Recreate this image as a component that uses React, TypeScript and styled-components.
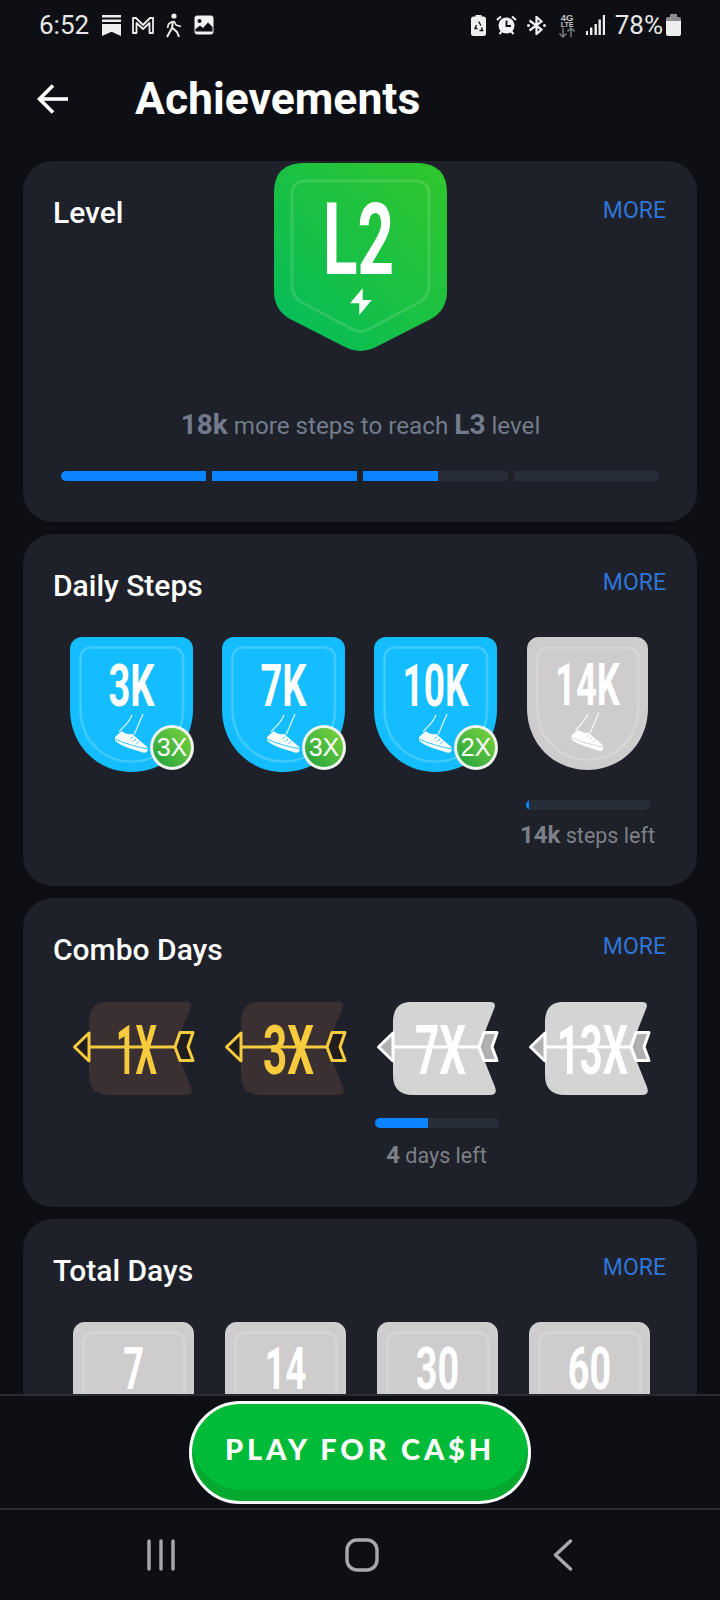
import React from "react";
import styled, { createGlobalStyle } from "styled-components";

const GlobalStyle = createGlobalStyle`
  html, body {
    margin: 0;
    padding: 0;
    background: #0d0f14;
  }
  * {
    box-sizing: border-box;
  }
`;

function ShoeMark({ gap }: { gap: string }) {
  return (
    <g>
      <path d="M62 78C59 86 53 90 49 95" fill="none" stroke="#fff" strokeWidth="1.2" opacity="0.85" />
      <path d="M73 77L64 98" fill="none" stroke="#fff" strokeWidth="1.2" opacity="0.85" />
      <path d="M45 100L52 94Q56 98 62 97L75 108Q78 110 77.5 113V114Q76 116.5 73 115.5L60 111.5Q50 108 45.5 104Z" fill="#fff" />
      <path d="M46 102.5Q58 108 77 111.8" fill="none" stroke={gap} strokeWidth="0.9" />
      <path d="M63 99.5L60.5 102M66 102L63.5 104.5M69 104.5L66.5 107" fill="none" stroke={gap} strokeWidth="0.9" />
    </g>
  );
}

function Shield({ tone, label, width, shoe, x2 }: { tone: "blue" | "grey"; label: string; width: number; shoe?: boolean; x2?: string }) {
  const fill = tone === "blue" ? "#13bdff" : "#cecccd";
  return (
    <ShieldBox $grey={tone === "grey"}>
      <svg width="100%" height="100%" viewBox="0 0 123 135">
        <path d="M12 0H111A12 12 0 0 1 123 12V72C123 108 96 135 61.5 135C27 135 0 108 0 72V12A12 12 0 0 1 12 0Z" fill={fill} />
        <path
          d="M20 10.5H103A10 10 0 0 1 113 20.5V72C113 102 91 124.5 61.5 124.5C32 124.5 10.5 102 10.5 72V20.5A10 10 0 0 1 20 10.5Z"
          fill="none"
          stroke="rgba(255,255,255,0.2)"
          strokeWidth="2.5"
        />
        <BadgeText x="61.5" y={shoe ? 69 : 68} textAnchor="middle" fontSize="60" textLength={width} lengthAdjust="spacingAndGlyphs">
          {label}
        </BadgeText>
        {shoe && <ShoeMark gap={fill} />}
      </svg>
      {x2 && <Multiplier>{x2}</Multiplier>}
    </ShieldBox>
  );
}

function ComboArrow({ label, width, done }: { label: string; width: number; done?: boolean }) {
  const body = done ? "#3a2f31" : "#d4d4d4";
  const line = done ? "#f6cb3e" : "#ffffff";
  const inner = done ? "#211d1e" : "#b0b0b0";
  return (
    <svg width="128" height="100" viewBox="-4 0 128 100">
      <path d="M34 2H113Q120 2 117 9L102 47L118 87Q121 95 113 95H36Q16 95 16 75V22Q16 2 34 2Z" fill={body} />
      <path d="M1.5 47L16 33V61Z" fill={inner} stroke={line} strokeWidth="3" strokeLinejoin="round" />
      <path d="M102 47L107 32.5H120L115 47L120 60.5H107Z" fill={inner} stroke={line} strokeWidth="3" strokeLinejoin="round" />
      <line x1="16" y1="47" x2="102" y2="47" stroke={line} strokeWidth="3" />
      <BadgeText x="63.5" y="74" textAnchor="middle" fontSize="69" $color={line} textLength={width} lengthAdjust="spacingAndGlyphs">
        {label}
      </BadgeText>
    </svg>
  );
}

function LevelBadge() {
  return (
    <svg width="173" height="190" viewBox="0 0 173 190">
      <defs>
        <linearGradient id="levelGreen" x1="1" y1="0" x2="0" y2="1">
          <stop offset="0" stopColor="#31c62b" />
          <stop offset="1" stopColor="#03bc5c" />
        </linearGradient>
      </defs>
      <path
        d="M30 0H143Q173 0 173 30V128Q173 147 157 156L100 185Q86 191 73 185L16 156Q0 147 0 128V30Q0 0 30 0Z"
        fill="url(#levelGreen)"
      />
      <path
        d="M32 18H141Q155 18 155 32V122Q155 134 144 140L95 166Q86 171 78 166L29 140Q18 134 18 122V32Q18 18 32 18Z"
        fill="none"
        stroke="rgba(255,255,255,0.13)"
        strokeWidth="3"
      />
      <BadgeText x="84.5" y="111" textAnchor="middle" fontSize="101" textLength="71" lengthAdjust="spacingAndGlyphs">
        L2
      </BadgeText>
      <path d="M88.7 125.3L76 140.3H85.3V152L97.7 137H88.7Z" fill="#fff" />
    </svg>
  );
}

function StatusLeft() {
  return (
    <>
      <svg width="19" height="21" viewBox="0 0 19 21" fill="#eee">
        <rect width="19" height="2.5" />
        <rect y="4.5" width="19" height="2.5" />
        <path d="M0 9H19V21L9.5 16.8L0 21Z" />
      </svg>
      <svg width="22" height="17" viewBox="0 0 22 17" fill="none" stroke="#eee" strokeWidth="1.8" strokeLinejoin="round">
        <path d="M1 16V1H4L11 8L18 1H21V16H17.5V6L11 12L4.5 6V16Z" />
      </svg>
      <svg width="18" height="25" viewBox="0 0 18 25" fill="none" stroke="#eee" strokeWidth="2" strokeLinejoin="round">
        <circle cx="9" cy="3" r="2.6" fill="#eee" stroke="none" />
        <path d="M8 8L7 15L2 24" />
        <path d="M7.5 15L12 19L14 24" />
        <path d="M7.5 8.5L3.5 11L2.5 15" strokeWidth="1.6" />
        <path d="M9 8L11 12L16 13.5" strokeWidth="1.6" />
      </svg>
      <svg width="20" height="20" viewBox="0 0 20 20">
        <rect width="19" height="19" x="0.5" y="0.5" rx="3" fill="#f2f2f2" />
        <circle cx="5.5" cy="6" r="2" fill="#0d0f14" />
        <path d="M1.5 16.5V14L6 10.5L9 13L14 7.5L18.5 12V16.5Z" fill="#0d0f14" />
      </svg>
    </>
  );
}

function StatusRight() {
  return (
    <>
      <svg width="15" height="21" viewBox="0 0 15 21">
        <rect x="4.5" width="6" height="2.5" fill="#eee" />
        <rect y="1.5" width="15" height="19.5" rx="2.5" fill="#eee" />
        <path d="M7.5 6.5L10 10.5M5.5 10L4 13.5H6.5M8.5 15.5H11.5L10.5 12.5" fill="none" stroke="#0d0f14" strokeWidth="1.4" />
      </svg>
      <svg width="21" height="20" viewBox="0 0 21 20" fill="#f2f2f2">
        <circle cx="10.5" cy="10.5" r="8" />
        <path d="M1 5L5 1.5M20 5L16 1.5" stroke="#f2f2f2" strokeWidth="2" />
        <path d="M3.5 19L6 16M17.5 19L15 16" stroke="#f2f2f2" strokeWidth="2" />
        <path d="M10.5 5.5V11H15" fill="none" stroke="#0d0f14" strokeWidth="1.8" />
      </svg>
      <svg width="19" height="19" viewBox="0 0 19 19" fill="none" stroke="#f2f2f2" strokeWidth="2.2">
        <path d="M2.5 4.5L14.5 13.5L9.5 18V1L14.5 5.5L2.5 14.5" />
        <circle cx="1.5" cy="9.5" r="1.5" fill="#f2f2f2" stroke="none" />
        <circle cx="17.5" cy="9.5" r="1.5" fill="#f2f2f2" stroke="none" />
      </svg>
      <svg width="18" height="26" viewBox="0 -2 18 26">
        <StatusMicro x="9" y="7" textAnchor="middle" fontSize="9.5">4G</StatusMicro>
        <StatusMicro x="9" y="13" textAnchor="middle" fontSize="7">LTE</StatusMicro>
        <path d="M5 14V23M1.5 19.5L5 23L8.5 19.5M13 23V14M9.5 17.5L13 14L16.5 17.5" fill="none" stroke="#7b7b7d" strokeWidth="1.5" />
      </svg>
      <svg width="19" height="20" viewBox="0 0 19 20" fill="#eee">
        <rect x="0" y="16" width="2" height="4" />
        <rect x="4" y="12.5" width="2.4" height="7.5" />
        <rect x="8.5" y="9" width="2.4" height="11" />
        <rect x="12.5" y="4.5" width="2.4" height="15.5" />
        <rect x="16.8" y="0" width="2.2" height="20" />
      </svg>
    </>
  );
}

function App() {
  return (
    <Screen>
      <GlobalStyle />
      <StatusBar>
        <StatusGroup>
          <Clock>6:52</Clock>
          <StatusLeft />
        </StatusGroup>
        <StatusRightGroup>
          <StatusRight />
          <Battery>
            78%
            <svg width="15" height="22" viewBox="0 0 15 22">
              <rect x="4" width="7" height="3" fill="#8d8d8f" />
              <path d="M0 5Q0 3 2 3H13Q15 3 15 5V8H0Z" fill="#8d8d8f" />
              <path d="M0 7H15V20Q15 22 13 22H2Q0 22 0 20Z" fill="#eee" />
            </svg>
          </Battery>
        </StatusRightGroup>
      </StatusBar>

      <Header>
        <svg width="32" height="30" viewBox="0 0 32 30" fill="none" stroke="#fff" strokeWidth="3.6">
          <path d="M2 15H31" />
          <path d="M16 1.5L2.5 15L16 28.5" />
        </svg>
        <PageTitle>Achievements</PageTitle>
      </Header>

      <ScrollArea>
        <LevelCard>
          <LevelHeader>
            <LevelTitle>Level</LevelTitle>
            <LevelBadge />
            <LevelMore>MORE</LevelMore>
          </LevelHeader>
          <LevelHint>
            <b>18k</b> more steps to reach <b>L3</b> level
          </LevelHint>
          <LevelTrack>
            <LevelSegment><LevelFill style={{ width: "100%" }} /></LevelSegment>
            <LevelSegment><LevelFill style={{ width: "100%" }} /></LevelSegment>
            <LevelSegment><LevelFill style={{ width: "52%" }} /></LevelSegment>
            <LevelSegment />
          </LevelTrack>
        </LevelCard>

        <Card $bottom={36}>
          <CardHeader>
            <CardTitle>Daily Steps</CardTitle>
            <More>MORE</More>
          </CardHeader>
          <BadgeRow>
            <BadgeCell><Shield tone="blue" label="3K" width={46} shoe x2="3X" /></BadgeCell>
            <BadgeCell><Shield tone="blue" label="7K" width={46} shoe x2="3X" /></BadgeCell>
            <BadgeCell><Shield tone="blue" label="10K" width={66} shoe x2="2X" /></BadgeCell>
            <BadgeCell>
              <Shield tone="grey" label="14K" width={66} shoe />
              <Track $top={30}><Fill style={{ width: "3%" }} /></Track>
              <Left $top={11}><b>14k</b> steps left</Left>
            </BadgeCell>
          </BadgeRow>
        </Card>

        <Card $bottom={37}>
          <CardHeader>
            <CardTitle>Combo Days</CardTitle>
            <More>MORE</More>
          </CardHeader>
          <ComboRow>
            <BadgeCell><ComboArrow label="1X" width={41} done /></BadgeCell>
            <BadgeCell><ComboArrow label="3X" width={51} done /></BadgeCell>
            <BadgeCell>
              <ComboArrow label="7X" width={51} />
              <Track $top={18}><Fill style={{ width: "43%" }} /></Track>
              <Left $top={13}><b>4</b> days left</Left>
            </BadgeCell>
            <BadgeCell><ComboArrow label="13X" width={71} /></BadgeCell>
          </ComboRow>
        </Card>

        <Card $bottom={36}>
          <CardHeader>
            <CardTitle>Total Days</CardTitle>
            <More>MORE</More>
          </CardHeader>
          <TotalRow>
            <BadgeCell><Shield tone="grey" label="7" width={21} /></BadgeCell>
            <BadgeCell><Shield tone="grey" label="14" width={42} /></BadgeCell>
            <BadgeCell><Shield tone="grey" label="30" width={44} /></BadgeCell>
            <BadgeCell><Shield tone="grey" label="60" width={44} /></BadgeCell>
          </TotalRow>
        </Card>
      </ScrollArea>

      <Footer>
        <PlayButton>PLAY FOR CA$H</PlayButton>
      </Footer>

      <NavBar>
        <NavSlot>
          <svg width="30" height="32" viewBox="0 0 30 32" stroke="#a9a9ac" strokeWidth="3.4" strokeLinecap="round">
            <path d="M3 2V30M15 2V30M27 2V30" />
          </svg>
        </NavSlot>
        <NavSlot>
          <svg width="34" height="34" viewBox="0 0 34 34" fill="none" stroke="#a9a9ac" strokeWidth="3.4">
            <rect x="2" y="2" width="30" height="30" rx="10" />
          </svg>
        </NavSlot>
        <NavSlot>
          <svg width="20" height="32" viewBox="0 0 20 32" fill="none" stroke="#a9a9ac" strokeWidth="3.4" strokeLinecap="round" strokeLinejoin="round">
            <path d="M17.5 2L2.5 16L17.5 30" />
          </svg>
        </NavSlot>
      </NavBar>
    </Screen>
  );
}

const Screen = styled.div`
  width: 720px;
  height: 1600px;
  display: flex;
  flex-direction: column;
  overflow: hidden;
  background: #0d0f14;
  color: #fff;
  font-family: Roboto, "Liberation Sans", sans-serif;
`;

const StatusBar = styled.div`
  height: 50px;
  padding: 0 39px 0 39px;
  display: flex;
  align-items: center;
  justify-content: space-between;
  flex-shrink: 0;
`;

const StatusGroup = styled.div`
  display: flex;
  align-items: center;
  gap: 11px;
`;

const StatusRightGroup = styled(StatusGroup)`
  gap: 10px;

  > svg:nth-of-type(3) {
    margin-right: 2px;
  }
`;

const Clock = styled.span`
  font-size: 26px;
  color: #e8e8e8;
  margin-right: 2px;
`;

const Battery = styled.span`
  display: flex;
  align-items: center;
  gap: 3px;
  font-size: 26px;
  color: #e8e8e8;
`;

const StatusMicro = styled.text`
  font-family: "Liberation Sans", sans-serif;
  font-weight: 700;
  fill: #c4c4c6;
`;

const Header = styled.div`
  height: 98px;
  padding-left: 37px;
  display: flex;
  align-items: center;
  gap: 66px;
  flex-shrink: 0;
`;

const PageTitle = styled.h1`
  margin: 0;
  font-size: 44.5px;
  font-weight: 700;
  line-height: 50px;
`;

const ScrollArea = styled.div`
  flex: 1;
  min-height: 0;
  overflow: hidden;
  padding: 13px 23px 0;
  display: flex;
  flex-direction: column;
  gap: 12px;
`;

const Card = styled.section<{ $bottom: number }>`
  flex-shrink: 0;
  background: #1e2129;
  border-radius: 30px;
  padding: 35px 31px ${(p) => p.$bottom}px 30px;
`;

const LevelCard = styled.section`
  flex-shrink: 0;
  height: 361px;
  background: #1e2129;
  border-radius: 30px;
  padding: 2px 30px 0 31px;
`;

const CardHeader = styled.div`
  display: flex;
  justify-content: space-between;
  align-items: flex-start;
  height: 34px;
`;

const LevelHeader = styled.div`
  display: grid;
  grid-template-columns: 1fr auto 1fr;
  align-items: start;
  height: 190px;
`;

const CardTitle = styled.h2`
  margin: 0;
  font-size: 30px;
  font-weight: 500;
  line-height: 34px;
`;

const LevelTitle = styled(CardTitle)`
  margin: 33px 0 0 -1px;
`;

const More = styled.span`
  font-size: 23px;
  line-height: 27px;
  color: #2f74d9;
`;

const LevelMore = styled(More)`
  margin: 34px 1px 0 0;
  justify-self: end;
`;

const LevelHint = styled.p`
  margin: 55px 0 0;
  text-align: center;
  line-height: 34px;
  font-size: 24.2px;
  color: #727c8c;

  b {
    font-size: 28px;
    font-weight: 700;
  }
`;

const LevelTrack = styled.div`
  margin: 28px 8px 0 7px;
  display: flex;
  gap: 6px;
  height: 10px;
  border-radius: 5px;
  overflow: hidden;
`;

const LevelSegment = styled.div`
  flex: 1;
  background: #272d39;
`;

const LevelFill = styled.div`
  height: 100%;
  background: #0a84ff;
`;

const BadgeRow = styled.div`
  margin: 34px 2.5px 0 2.5px;
  display: grid;
  grid-template-columns: repeat(4, 1fr);
`;

const ComboRow = styled(BadgeRow)`
  margin: 33px 1.5px 0 3.5px;
`;

const TotalRow = styled(BadgeRow)`
  margin: 34px 0.5px 0 4.5px;
`;

const BadgeCell = styled.div`
  display: flex;
  flex-direction: column;
  align-items: center;
`;

const ShieldBox = styled.div<{ $grey: boolean }>`
  position: relative;
  width: ${(p) => (p.$grey ? 121 : 123)}px;
  height: ${(p) => (p.$grey ? 133 : 135)}px;

  svg {
    display: block;
  }
`;

const BadgeText = styled.text<{ $color?: string }>`
  font-family: Roboto, "Liberation Sans", sans-serif;
  font-weight: 700;
  fill: ${(p) => p.$color || "#fff"};
`;

const Multiplier = styled.span`
  position: absolute;
  left: 80px;
  top: 88px;
  width: 44px;
  height: 45px;
  border-radius: 50%;
  border: 3px solid #f1f5ef;
  background: linear-gradient(45deg, #1fa040, #7ed43c);
  display: flex;
  align-items: center;
  justify-content: center;
  font-family: "Liberation Sans", sans-serif;
  font-size: 25px;
  color: #fff;
`;

const Track = styled.div<{ $top: number }>`
  margin-top: ${(p) => p.$top}px;
  width: 124px;
  height: 10px;
  border-radius: 5px;
  background: #272d39;
  overflow: hidden;
`;

const Fill = styled.div`
  height: 100%;
  background: #0a84ff;
`;

const Left = styled.div<{ $top: number }>`
  margin-top: ${(p) => p.$top}px;
  line-height: 28px;
  font-size: 21.5px;
  color: #7d8086;
  white-space: nowrap;

  b {
    font-size: 24px;
    font-weight: 700;
  }
`;

const Footer = styled.div`
  flex-shrink: 0;
  height: 116px;
  border-top: 2px solid #2a2c31;
  border-bottom: 2px solid #2a2c31;
  padding-top: 5px;
  display: flex;
  justify-content: center;
  background: #0d0f14;
`;

const PlayButton = styled.button`
  width: 342px;
  height: 103px;
  padding: 0 0 8px;
  border: 3px solid #fff;
  border-radius: 52px;
  background: #00bb37;
  box-shadow: inset 0 -11px 0 #07a830;
  color: #fff;
  font-family: Lato, "Liberation Sans", sans-serif;
  font-size: 29px;
  font-weight: 900;
  letter-spacing: 3.8px;
`;

const NavBar = styled.nav`
  flex-shrink: 0;
  height: 90px;
  padding: 0 57px 0 60px;
  display: grid;
  grid-template-columns: repeat(3, 1fr);
  align-items: center;
`;

const NavSlot = styled.div`
  display: flex;
  justify-content: center;

  svg {
    display: block;
  }
`;

export default App;
